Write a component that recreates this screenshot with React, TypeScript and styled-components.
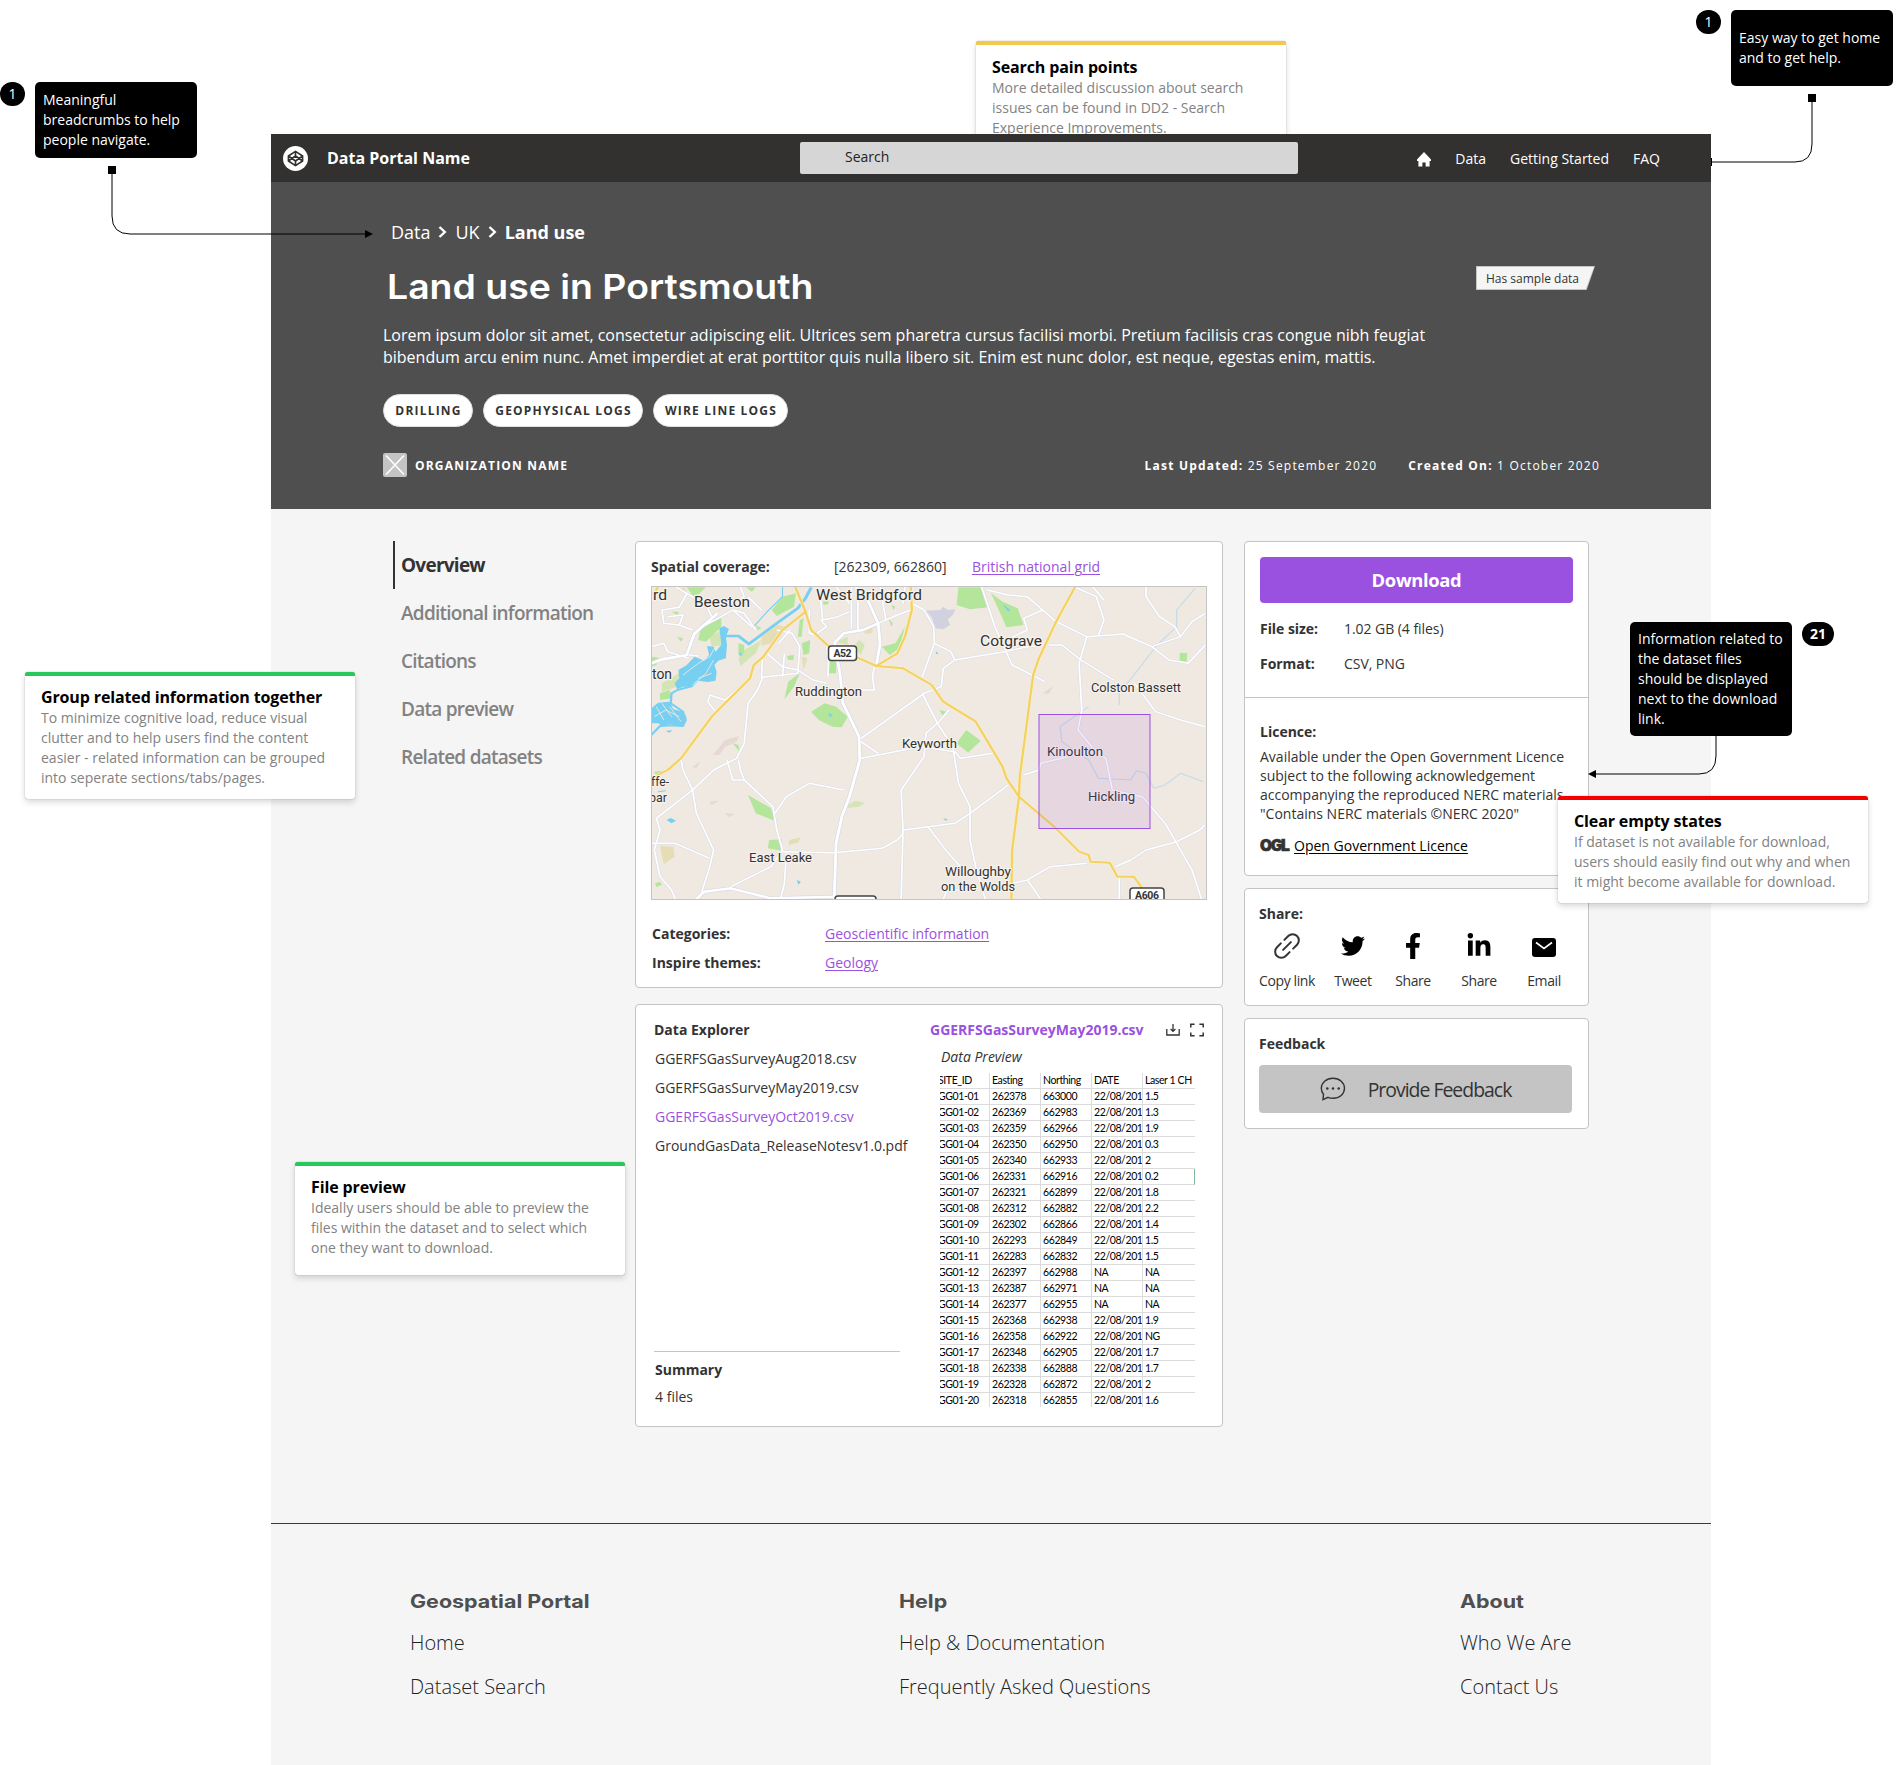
import React from "react";
import styled, { createGlobalStyle, css } from "styled-components";
import { FaTwitter, FaFacebookF, FaLinkedinIn } from "react-icons/fa";

const GlobalStyle = createGlobalStyle`
  * { box-sizing: border-box; }
  body {
    margin: 0;
    background: #fff;
    font-family: "Open Sans", "Noto Sans", sans-serif;
    color: #333;
  }
  p, h1, h2, h3 { margin: 0; }
`;

const purple = "#9b51e0";
const line = "#c4c4c4";
const display = `"Inter", "Open Sans", sans-serif`;

const Board = styled.div`
  position: relative;
  width: 1903px;
  height: 1765px;
  padding: 134px 192px 0 271px;
  overflow: hidden;
`;

const Page = styled.div`
  position: relative;
  width: 1440px;
  height: 1631px;
  background: #f5f5f5;
`;

/* Header */

const Header = styled.header`
  display: flex;
  align-items: center;
  height: 48px;
  padding: 0 51px 0 12px;
  background: #32312f;
  color: #fff;
`;

const Logo = styled.div`
  display: flex;
  align-items: center;
  justify-content: center;
  width: 25px;
  height: 25px;
  border-radius: 50%;
  background: #fff;
`;

const SiteName = styled.div`
  flex: none;
  width: 492px;
  padding-left: 19px;
  font-size: 16px;
  font-weight: 700;
  line-height: 24px;
`;

const SearchBox = styled.div`
  flex: none;
  width: 498px;
  height: 32px;
  padding-left: 45px;
  border-radius: 2px;
  background: #d6d6d6;
  color: #222;
  font-size: 14px;
  line-height: 30px;
`;

const TopNav = styled.nav`
  display: flex;
  flex: 1;
  align-items: center;
  justify-content: flex-end;
  padding-top: 2px;
  font-size: 14px;
  line-height: 20px;
  a { margin-left: 24px; }
`;

/* Hero */

const Hero = styled.section`
  height: 327px;
  padding: 38px 111px 0 112px;
  background: #4f4f4f;
  color: #fff;
`;

const Crumbs = styled.div`
  display: flex;
  align-items: center;
  gap: 8px;
  height: 24px;
  padding-left: 8px;
  font-size: 18px;
  line-height: 24px;
  strong { font-weight: 700; }
`;

const TitleRow = styled.div`
  display: flex;
  align-items: flex-start;
  justify-content: space-between;
  height: 40px;
  margin-top: 23px;
  padding: 0 5px 0 4px;
`;

const Title = styled.h1`
  font-family: ${display};
  font-size: 34px;
  font-weight: 600;
  line-height: 40px;
  transform: scaleX(1.1);
  transform-origin: left;
`;

const Flag = styled.span`
  position: relative;
  width: 119px;
  height: 24px;
  margin-top: -1px;
  padding-left: 10px;
  background: #c4c4c4;
  clip-path: polygon(0 0, 100% 0, 93% 100%, 0 100%);
  font-size: 12px;
  line-height: 25px;
  color: #333;
  &::before {
    content: "";
    position: absolute;
    inset: 1px;
    background: #f5f5f5;
    clip-path: polygon(0 0, 100% 0, 93% 100%, 0 100%);
  }
  span { position: relative; }
`;

const Lead = styled.p`
  width: 1100px;
  margin-top: 17px;
  font-size: 16px;
  line-height: 22px;
`;

const Tags = styled.div`
  display: flex;
  gap: 10px;
  margin-top: 26px;
`;

const Tag = styled.span<{ $w: number }>`
  width: ${(p) => p.$w}px;
  height: 33px;
  padding-left: 1px;
  border: 1px solid #e0e0e0;
  border-radius: 17px;
  background: #fff;
  color: #333;
  font-size: 12px;
  font-weight: 700;
  letter-spacing: 1.2px;
  line-height: 32px;
  text-align: center;
  white-space: nowrap;
`;

const Meta = styled.div`
  display: flex;
  align-items: center;
  height: 24px;
  margin-top: 26px;
  font-size: 12px;
  letter-spacing: 1.2px;
  line-height: 24px;
  white-space: nowrap;
`;

const OrgMark = styled.svg`
  width: 24px;
  height: 24px;
  margin-right: 8px;
  border-radius: 2px;
  background: #c4c4c4;
`;

const OrgName = styled.strong`
  flex: 1;
  padding-top: 1px;
`;

const Dates = styled.div`
  display: flex;
  gap: 31px;
  padding-top: 1px;
  font-weight: 400;
`;

/* Body */

const Main = styled.main`
  display: flex;
  align-items: flex-start;
  height: 1014px;
  padding: 32px 0 0 122px;
`;

const Sidebar = styled.nav`
  width: 242px;
`;

const SideLink = styled.a<{ $active?: boolean }>`
  display: block;
  height: 48px;
  padding-left: 6px;
  border-left: 2px solid ${(p) => (p.$active ? "#333" : "transparent")};
  color: ${(p) => (p.$active ? "#333" : "#828282")};
  font-size: 19px;
  font-weight: ${(p) => (p.$active ? 700 : 600)};
  letter-spacing: -0.75px;
  line-height: 48px;
`;

const Column = styled.div<{ $w: number; $gap: number; $ml?: number }>`
  display: flex;
  flex-direction: column;
  gap: ${(p) => p.$gap}px;
  width: ${(p) => p.$w}px;
  margin-left: ${(p) => p.$ml ?? 0}px;
`;

const Card = styled.section<{ $h: number }>`
  height: ${(p) => p.$h}px;
  border: 1px solid ${line};
  border-radius: 4px;
  background: #fff;
  font-size: 14px;
  line-height: 20px;
`;

const cell = css`
  white-space: nowrap;
`;

const Label = styled.strong`
  ${cell}
  font-weight: 700;
`;

const Link = styled.a`
  ${cell}
  color: ${purple};
  text-decoration: underline;
  text-underline-offset: 2px;
`;

const CoverageRow = styled.div`
  display: grid;
  grid-template-columns: 183px 138px 1fr;
  padding: 15px 0 9px 15px;
`;

const MapFrame = styled.div`
  width: 556px;
  height: 314px;
  margin-left: 15px;
  border: 1px solid ${line};
  svg { display: block; }
`;

const FactRow = styled.div<{ $mt: number }>`
  display: grid;
  grid-template-columns: 173px 1fr;
  height: 20px;
  margin: ${(p) => p.$mt}px 0 0 16px;
`;

const Explorer = styled(Card)`
  display: flex;
  padding: 15px 0 0 18px;
`;

const FilePane = styled.div`
  display: flex;
  flex-direction: column;
  width: 276px;
  height: 400px;
`;

const FileName = styled.a<{ $on?: boolean }>`
  ${cell}
  margin-top: 9px;
  padding-left: 1px;
  color: ${(p) => (p.$on ? purple : "#333")};
`;

const Summary = styled.div`
  width: 246px;
  margin-top: auto;
  margin-bottom: 13px;
  padding: 8px 0 0 1px;
  border-top: 1px solid ${line};
  p { margin-top: 7px; }
`;

const PreviewPane = styled.div`
  width: 274px;
`;

const PreviewHead = styled.div`
  display: flex;
  align-items: center;
  height: 20px;
  strong { flex: 1; color: ${purple}; }
  svg + svg { margin-left: 10px; }
`;

const PreviewCaption = styled.p`
  margin: 7px 0 6px 11px;
  font-style: italic;
`;

const Table = styled.div`
  display: grid;
  grid-template-columns: 50px 51px 51px 51px 52px;
  grid-auto-rows: 16px;
  width: 255px;
  height: 334px;
  margin-left: 10px;
  overflow: hidden;
`;

const Cell = styled.div<{ $first: boolean; $last: boolean }>`
  overflow: hidden;
  padding-left: ${(p) => (p.$first ? 0 : 2)}px;
  text-indent: ${(p) => (p.$first ? -2 : 0)}px;
  border-right: ${(p) => (p.$last ? "0" : "1px solid #dcdcdc")};
  border-bottom: 1px solid #dcdcdc;
  color: #000;
  font-family: "Lato", "Open Sans", sans-serif;
  font-size: 10.5px;
  letter-spacing: -0.4px;
  line-height: 15px;
  white-space: nowrap;
`;

const Selection = styled(Cell)`
  border-right: 1px solid #7fb89a;
`;

const DownloadCard = styled(Card)`
  padding-top: 15px;
`;

const Button = styled.button<{ $tone: "primary" | "muted" }>`
  display: flex;
  align-items: center;
  justify-content: center;
  width: 313px;
  height: ${(p) => (p.$tone === "primary" ? 46 : 48)}px;
  margin-left: ${(p) => (p.$tone === "primary" ? 15 : 14)}px;
  padding: 0 0 ${(p) => (p.$tone === "primary" ? 2 : 0)}px;
  border: 0;
  border-radius: 4px;
  background: ${(p) => (p.$tone === "primary" ? purple : "#c4c4c4")};
  color: ${(p) => (p.$tone === "primary" ? "#fff" : "#333")};
  font-family: inherit;
  font-size: ${(p) => (p.$tone === "primary" ? 18.4 : 19.4)}px;
  font-weight: ${(p) => (p.$tone === "primary" ? 700 : 400)};
  letter-spacing: ${(p) => (p.$tone === "primary" ? -0.35 : -0.98)}px;
  svg { margin-right: 22px; }
`;

const SpecRow = styled.div<{ $mt: number }>`
  display: grid;
  grid-template-columns: 84px 1fr;
  height: 20px;
  margin: ${(p) => p.$mt}px 0 0 15px;
  letter-spacing: -0.05px;
`;

const Licence = styled.div`
  margin-top: 23px;
  padding: 24px 0 0 15px;
  border-top: 1px solid ${line};
  p { width: 320px; margin-top: 5px; line-height: 19px; }
`;

const OglRow = styled.div`
  display: flex;
  align-items: center;
  gap: 4px;
  margin-top: 13px;
  a { color: #000; text-decoration: underline; text-underline-offset: 2px; }
`;

const OglMark = styled.span`
  width: 30px;
  font-family: "Inter", sans-serif;
  font-size: 15.5px;
  font-weight: 900;
  letter-spacing: -1.3px;
  -webkit-text-stroke: 0.6px #333;
`;

const PaddedLabel = styled(Label)<{ $pb?: number }>`
  display: block;
  padding: 15px 0 ${(p) => p.$pb ?? 0}px 14px;
`;

const ShareRow = styled.div`
  display: grid;
  grid-template-columns: 54px 78px 42px 90px 40px;
  margin-left: 15px;
  padding-top: 9px;
`;

const ShareItem = styled.a`
  display: flex;
  flex-direction: column;
  align-items: center;
  gap: 12px;
  font-size: 14px;
  letter-spacing: -0.4px;
  white-space: nowrap;
  svg { height: 26px; color: #000; }
`;

/* Footer */

const Footer = styled.footer`
  display: grid;
  grid-template-columns: 489px 561px 1fr;
  height: 108px;
  padding: 65px 0 0 139px;
  border-top: 1px solid #1d3f76;
`;

const FooterColumn = styled.div`
  h3 {
    font-family: ${display};
    font-size: 18.5px;
    font-weight: 700;
    line-height: 24px;
    color: #4f4f4f;
    white-space: nowrap;
    transform: scaleX(1.16);
    transform-origin: left;
  }
  a {
    display: block;
    margin-top: 16px;
    font-size: 20px;
    font-weight: 300;
    line-height: 28px;
    color: #222;
    white-space: nowrap;
  }
`;

/* Annotations pinned over the board */

const Pin = styled.div<{ $x: number; $y: number }>`
  position: absolute;
  left: ${(p) => p.$x}px;
  top: ${(p) => p.$y}px;
`;

const Callout = styled(Pin)<{ $h: number }>`
  display: flex;
  align-items: center;
  width: 162px;
  height: ${(p) => p.$h}px;
  padding: 0 0 0 8px;
  border-radius: 5px;
  background: #000;
  color: #fff;
  font-size: 14px;
  line-height: 20px;
  white-space: pre-line;
`;

const Badge = styled(Pin)<{ $w?: number }>`
  width: ${(p) => p.$w ?? 25}px;
  height: 24px;
  border-radius: 12px;
  background: #000;
  color: #fff;
  font-size: 14px;
  font-weight: ${(p) => (p.$w ? 700 : 400)};
  line-height: 24px;
  text-align: center;
`;

const Note = styled(Pin)<{ $w: number; $h: number; $color: string; $top?: number }>`
  width: ${(p) => p.$w}px;
  height: ${(p) => p.$h}px;
  padding: ${(p) => p.$top ?? 10}px 0 0 16px;
  border-top: 4px solid ${(p) => p.$color};
  border-radius: 3px;
  background: #fff;
  box-shadow: 0 0 1px rgba(0, 0, 0, 0.45), 0 3px 6px rgba(0, 0, 0, 0.16);
  color: #828282;
  font-size: 14px;
  line-height: 20px;
  white-space: pre-line;
  h2 {
    font-size: 16px;
    font-weight: 700;
    line-height: 22px;
    letter-spacing: -0.13px;
    color: #000;
  }
`;

const Wires = styled.svg`
  position: absolute;
  left: 0;
  top: 0;
  pointer-events: none;
`;

const HomeIcon = () => (
  <svg width="14" height="15" viewBox="0 0 14 15">
    <path d="M7 0 14 7.500 V9 H12.600 V14.500 H8.600 V10.500 H5.400 V14.500 H1.400 V9 H0 V7.500 Z" fill="#fff" />
  </svg>
);

const LogoIcon = () => (
  <svg width="17" height="17" viewBox="0 0 24 24" fill="none" stroke="#32312f" strokeWidth="2.3" strokeLinejoin="round">
    <path d="M12 2 22 8.5 22 15.5 12 22 2 15.5 2 8.5Z M12 22V15.5 M22 8.5 12 15.5 2 8.5 M2 15.5 12 8.5 22 15.5 M12 2V8.5" />
  </svg>
);

const Chevron = () => (
  <svg width="9" height="12" viewBox="0 0 9 12" fill="none" stroke="#fff" strokeWidth="2.4">
    <path d="M1.5 1 6.8 6 1.5 11" />
  </svg>
);

const TrayIcon = () => (
  <svg width="14" height="14" viewBox="0 0 14 14" fill="none" stroke="#333" strokeWidth="1.3">
    <path d="M.8 6V12H13.2V6 M7 1V8.4 M4.6 6 7 8.4 9.4 6" />
  </svg>
);

const ExpandIcon = () => (
  <svg width="14" height="14" viewBox="0 0 14 14" fill="none" stroke="#333" strokeWidth="1.5">
    <path d="M.8 4.6V1.2H4.6 M9.4 1.2H13.2V4.6 M13.2 9.4V12.8H9.4 M4.6 12.8H.8V9.4" />
  </svg>
);

const ChainIcon = () => (
  <svg width="26" height="26" viewBox="0 0 26 26" fill="none" stroke="#333" strokeWidth="2" strokeLinecap="round">
    <g transform="rotate(-45 13 13)">
      <path d="M10.500 6.800H5A6.200 6.200 0 0 0 5 19.200H10.500 M15.500 6.800H21A6.200 6.200 0 0 1 21 19.200H15.500 M7.500 13H18.500" />
    </g>
  </svg>
);

const MailIcon = () => (
  <svg width="24" height="26" viewBox="0 0 24 26">
    <rect x="0" y="5" width="24" height="19" rx="3" />
    <path d="M4 9.5 12 15.5 20 9.5" fill="none" stroke="#fff" strokeWidth="1.6" />
  </svg>
);

const ChatIcon = () => (
  <svg width="26" height="24" viewBox="0 0 26 24" fill="none" stroke="#333" strokeWidth="1.4">
    <path d="M13 1.3C19.700 1.300 24.500 5.800 24.500 11.300C24.500 17 19.600 21.300 13 21.300C11.200 21.300 9.500 21 8 20.300L3 22.600 3.500 17.300C2.100 15.600 1.300 13.500 1.300 11.300C1.300 5.800 6.300 1.300 13 1.300Z" />
    <g fill="#333" stroke="none">
      <circle cx="7.300" cy="11.500" r="1.300" />
      <circle cx="13" cy="11.500" r="1.300" />
      <circle cx="18.700" cy="11.500" r="1.300" />
    </g>
  </svg>
);

const minorRoads = [
  "M57 400 90 385 150 375 165 320 190 290 240 260 270 240 300 250 330 300",
  "M85 240 130 232 150 190 120 170 M85 240 90 280 130 285 140 255 100 260 M150 190 200 225 215 260 M180 215 260 225 300 200 290 170",
  "M130 285 165 300 M57 350 90 340 100 365 155 385 M155 375 180 378 M270 240 320 290 M310 200 345 240",
  "M470 240 470 310 500 320 515 345 M500 210 505 270 540 262 575 245 M500 270 515 290 490 310 M615 200 590 170 M575 220 560 200 540 170",
  "M650 280 700 255 735 240 M580 295 580 170 M597 170 597 300 M655 170 670 270 M720 170 715 220",
  "M730 215 770 240 795 290 797 340 840 365 850 390 M797 340 765 440 M1090 345 1040 350 980 365 850 390 820 415 815 470 770 490 605 625",
  "M920 170 955 290 1000 405 1085 455 M935 180 990 195 1040 200 1080 240 1115 275 M1080 240 1030 265 1040 300 985 330",
  "M1165 172 1220 200 1240 270 1225 318 M1210 170 1240 210 M1115 275 1195 320 1290 312 1365 350 1410 390 1460 400 1505 345",
  "M1365 350 1440 320 1470 275 1505 250 M1350 170 1350 200 1385 260 1425 290 1440 320",
  "M1195 320 1175 400 1182 540 1172 600 1215 660 1245 685 1262 780 M1095 345 1130 345 1180 390 1265 450 M1320 460 1375 545 1440 570 1505 590",
  "M355 365 400 410 440 420 480 450 515 460 M385 300 425 310 445 350 440 430 345 442 348 380 M405 370 400 440 M420 300 390 340",
  "M515 345 520 400 518 440 M640 410 635 440 640 480 590 480 M348 442 335 480 310 520 300 640 280 685 220 720 165 780 70 865 80 900 65 960 80 1040 110 1080 120 1108",
  "M205 515 210 495 250 510 M205 515 225 545 M250 510 300 460 M135 690 140 720 165 780 175 850 220 960 210 1010 185 1100",
  "M255 690 270 750 300 750 375 830 385 900 400 960 370 1010 265 1070 M285 690 290 720 300 750",
  "M605 685 650 675 760 650 850 665 865 685 950 670 M605 635 650 670 M765 490 805 580 845 650 860 760 890 830 890 930 905 1010 930 1108",
  "M835 540 805 580 775 610 770 680 710 780 715 900 710 1108 M715 900 780 890 850 880 890 850 990 765 M780 890 830 965 880 1030",
  "M380 850 410 800 470 760 560 780 M57 940 120 940 210 985 M400 965 535 968 660 955 700 930 715 910 M410 970 405 1060 395 1108",
  "M1030 735 1070 720 1075 700 1140 682 1215 655 M1262 780 1340 800 1400 880 1430 940 1470 1020 1495 1108",
  "M1270 1010 1310 990 1350 960 1430 935 1490 900 1503 885 M1000 1060 1040 1050 1100 1010 1195 1000 M1040 1050 1075 1108 M1280 1040 1280 1108 1255 1108 M820 1108 830 1080 870 1080",
];

const majorRoads = [
  "M536 338 550 430 558 520 600 620 602 690 575 800 555 860 540 940 535 1108",
  "M615 190 650 280 655 340 645 408 M536 338 560 310 610 300 650 280",
  "M175 1108 195 1085 265 1075 370 1105 540 1100 M57 400 80 390 150 375 170 310 230 250",
];

const yellowRoads = [
  "M57 745 100 720 135 685 215 560 315 445 325 405 350 380 400 300 460 245 433 170",
  "M460 245 475 300 520 348 590 380 645 408 715 415 790 465 820 515 905 575 975 710 985 745 1018 800 1110 890 1175 965 1200 975 1205 995 1255 998 1275 1040 1318 1040 1340 1075",
  "M735 170 738 240 720 320 700 370 645 408",
  "M1165 170 1115 275 1070 385 1055 435 1020 740 1018 800 1000 960 998 1108",
  "M65 190 75 170",
];

const parks = [
  "M860 172 918 172 937 232 890 238 855 225Z",
  "M945 190 975 215 1015 235 1022 260 1030 285 985 292 975 265Z",
  "M372 240 400 200 435 190 430 230 385 258Z M150 172 200 172 170 205Z M185 300 210 270 240 262 240 290 200 335 180 330Z",
  "M660 350 695 340 720 290 705 355 680 375Z M475 545 510 520 540 530 570 560 555 592 530 590 495 570Z",
  "M520 390 540 395 540 430 520 430Z M445 270 455 265 450 320 440 320Z M450 340 472 330 470 370 455 375Z",
  "M415 455 445 430 430 470 405 508Z M310 795 370 835 380 872 330 850Z M855 640 880 600 918 632 885 668Z",
  "M365 930 398 928 398 962 362 955Z M80 490 105 480 110 505 80 510Z M57 380 80 385 70 405 57 410Z",
  "M270 640 285 645 288 665Z M810 540 828 545 820 560Z M1438 368 1458 370 1455 400 1438 395Z M675 262 688 280 685 290Z M125 320 140 325 135 335Z",
  "M285 340 300 345 300 370 285 375Z M330 285 345 295 335 300Z M505 215 520 212 520 222 508 225Z M65 725 88 722 70 738Z M67 1060 80 1055 85 1065 70 1070Z M305 172 330 172 320 185Z M110 245 130 245 125 255Z M412 378 430 375 428 390 415 390Z M685 225 695 230 690 240Z",
];

type PlaceName = { name: string; x: number; y: number; size: number; width: number };

const places: PlaceName[] = [
  { name: "rd", x: 1, y: 13, size: 15, width: 14 },
  { name: "Beeston", x: 42, y: 20, size: 15, width: 56 },
  { name: "West Bridgford", x: 164, y: 13, size: 15, width: 106 },
  { name: "Cotgrave", x: 328, y: 59, size: 15, width: 62 },
  { name: "ton", x: 0, y: 92, size: 14, width: 20 },
  { name: "Ruddington", x: 143, y: 109, size: 13, width: 67 },
  { name: "Colston Bassett", x: 439, y: 105, size: 13, width: 90 },
  { name: "Keyworth", x: 250, y: 161, size: 13, width: 55 },
  { name: "Kinoulton", x: 395, y: 169, size: 13, width: 56 },
  { name: "Hickling", x: 436, y: 214, size: 13, width: 47 },
  { name: "ffe-", x: -1, y: 199, size: 13, width: 18 },
  { name: "bar", x: -3, y: 215, size: 13, width: 18 },
  { name: "East Leake", x: 97, y: 275, size: 13, width: 63 },
  { name: "Willoughby", x: 293, y: 289, size: 13, width: 66 },
  { name: "on the Wolds", x: 289, y: 304, size: 13, width: 74 },
];

const AreaMap = () => (
  <svg width="554" height="312" viewBox="0 0 554 312">
    <rect width="554" height="312" fill="#efe9e1" />
    <g transform="scale(.3827 .33333) translate(-59 -171)" fill="none" strokeLinejoin="round">
      <g fill="#d3e5b4">
        <path d="M210 320 240 300 245 345 215 350Z M85 460 130 430 125 470 85 485Z M540 335 570 320 570 345Z M600 330 615 345 605 375 585 350Z M285 385 300 360 345 330 330 370 290 408Z M560 835 590 812 615 818 600 830Z" />
      </g>
      <g fill="#e5ddb5">
        <path d="M345 320 385 285 410 290 370 340 345 348Z M612 292 635 290 635 308 615 312Z M80 948 115 950 118 980 90 1003Z M418 930 448 922 440 938 415 945Z M450 380 465 385 455 420Z M125 180 145 172 150 190Z" />
      </g>
      <g fill="#e8d7d3">
        <path d="M218 675 250 630 287 618 280 635 250 650 235 675Z M208 815 235 812 215 825Z M250 850 275 852 260 862Z M1080 490 1108 468 1095 492Z M165 710 185 695 175 715Z" />
      </g>
      <path d="M775 242 812 240 820 230 832 240 852 238 845 255 832 268 838 285 820 298 800 295 790 262Z" fill="#d2d1df" />
      {parks.map((d) => <path key={d} d={d} fill="#b3e59b" />)}
      <g fill="#77cff2">
        <path d="M235 295 247 288 260 297 252 320 255 345 252 385 232 392 222 405 228 425 225 452 205 456 180 452 165 470 140 470 125 478 118 460 130 445 128 420 150 405 170 380 195 392 208 375 203 348 220 350 225 365 240 345 238 320Z" />
        <path d="M57 535 75 518 105 515 115 538 140 545 149 560 145 580 128 590 110 582 85 587 75 580 57 580Z" />
        <path d="M97 870 108 864 122 872 110 880Z M800 362 808 372 802 372Z M820 865 832 868 826 872Z M437 1050 448 1055 442 1064Z M520 550 532 555 524 562Z M288 365 296 375 288 378Z M975 222 995 240 990 245Z M95 603 112 600 105 608Z" />
      </g>
      <g stroke="#77cff2">
        <path d="M250 318 285 318 312 342 350 310 385 280 440 235 460 205 475 172" strokeWidth="8" />
        <path d="M400 172 400 200 360 245 325 290 M75 785 95 782" strokeWidth="3" />
        <path d="M165 468 125 480 110 490 108 520 140 545 147 570 140 588 110 586 80 588 57 615" strokeWidth="6" />
      </g>
      <g stroke="#efe9e1" strokeWidth="2.500">
        <path d="M140 435 180 400 210 380 225 350 M165 465 200 430 220 390 M70 530 90 570 M85 520 110 560 M65 560 95 540 130 560 M180 445 215 430 M105 530 135 575" />
      </g>
      <path d="M1478 175 1430 240 1430 290 1375 350 1315 440 1280 490 1280 525 M1200 530 1125 590 1130 635 1200 690 1225 745 1310 750 1325 722 1350 730 1370 775 1400 765 1440 730 1500 755" stroke="#c3dbe8" strokeWidth="3" />
      <g>
        {minorRoads.map((d) => <path key={d} d={d} stroke="#dbdce8" strokeWidth="7.500" />)}
        {majorRoads.map((d) => <path key={d} d={d} stroke="#d6d8e6" strokeWidth="11" />)}
        {minorRoads.map((d) => <path key={d} d={d} stroke="#fff" strokeWidth="4.500" />)}
        {majorRoads.map((d) => <path key={d} d={d} stroke="#fff" strokeWidth="7.500" />)}
        {yellowRoads.map((d) => <path key={d} d={d} stroke="#fbf1cf" strokeWidth="9" />)}
        {yellowRoads.map((d) => <path key={d} d={d} stroke="#f3d162" strokeWidth="6" />)}
      </g>
    </g>
    <g fill="#fff" stroke="#444" strokeWidth="1.500">
      <rect x="176.500" y="59" width="28" height="14.500" rx="3" />
      <rect x="478" y="301" width="34" height="18" rx="3" />
      <rect x="183" y="309" width="41" height="18" rx="3" />
    </g>
    <g fontFamily="Roboto, sans-serif" fontSize="10.500" fontWeight="700" fill="#333">
      <text x="181.500" y="70" textLength="18">A52</text>
      <text x="483" y="312" textLength="24">A606</text>
    </g>
    <g fontFamily="Roboto, sans-serif" fill="#333" stroke="#f6f2ed" strokeWidth="2.500" strokeLinejoin="round" paintOrder="stroke">
      {places.map((p) => (
        <text key={p.name} x={p.x} y={p.y} fontSize={p.size} textLength={p.width} lengthAdjust="spacingAndGlyphs">{p.name}</text>
      ))}
    </g>
    <rect x="387" y="127.500" width="111" height="114" fill="#9b51e0" fillOpacity=".12" stroke="#9b51e0" />
  </svg>
);

const easting = [378, 369, 359, 350, 340, 331, 321, 312, 302, 293, 283, 397, 387, 377, 368, 358, 348, 338, 328, 318];
const northing = ["663000", "662983", "662966", "662950", "662933", "662916", "662899", "662882", "662866", "662849", "662832", "662988", "662971", "662955", "662938", "662922", "662905", "662888", "662872", "662855"];
const laser = ["1.5", "1.3", "1.9", "0.3", "2", "0.2", "1.8", "2.2", "1.4", "1.5", "1.5", "NA", "NA", "NA", "1.9", "NG", "1.7", "1.7", "2", "1.6"];
const rows: string[][] = [
  ["SITE_ID", "Easting", "Northing", "DATE", "Laser 1 CH"],
  ...easting.map((e, i) => [
    `GG01-${String(i + 1).padStart(2, "0")}`,
    `262${e}`,
    northing[i],
    laser[i] === "NA" ? "NA" : "22/08/201",
    laser[i],
  ]),
];

export default function App() {
  return (
    <Board>
      <GlobalStyle />
      <Note $x={976} $y={41} $w={310} $h={120} $top={11} $color="#f2c94c">
        <h2>Search pain points</h2>
        {"More detailed discussion about search\nissues can be found in DD2 - Search\nExperience Improvements."}
      </Note>

      <Page>
        <Header>
          <Logo><LogoIcon /></Logo>
          <SiteName>Data Portal Name</SiteName>
          <SearchBox>Search</SearchBox>
          <TopNav>
            <HomeIcon />
            <a>Data</a>
            <a>Getting Started</a>
            <a>FAQ</a>
          </TopNav>
        </Header>

        <Hero>
          <Crumbs>
            <span>Data</span><Chevron /><span>UK</span><Chevron /><strong>Land use</strong>
          </Crumbs>
          <TitleRow>
            <Title>Land use in Portsmouth</Title>
            <Flag><span>Has sample data</span></Flag>
          </TitleRow>
          <Lead>
            Lorem ipsum dolor sit amet, consectetur adipiscing elit. Ultrices sem pharetra cursus facilisi morbi. Pretium facilisis cras congue nibh feugiat
            <br />
            bibendum arcu enim nunc. Amet imperdiet at erat porttitor quis nulla libero sit. Enim est nunc dolor, est neque, egestas enim, mattis.
          </Lead>
          <Tags>
            <Tag $w={90}>DRILLING</Tag>
            <Tag $w={160}>GEOPHYSICAL LOGS</Tag>
            <Tag $w={135}>WIRE LINE LOGS</Tag>
          </Tags>
          <Meta>
            <OrgMark viewBox="0 0 24 24"><path d="M3 2.500 21 21.500M21 2.500 3 21.500" stroke="#fff" strokeWidth="1.600" /></OrgMark>
            <OrgName>ORGANIZATION NAME</OrgName>
            <Dates>
              <span><b>Last Updated:</b> 25 September 2020</span>
              <span><b>Created On:</b> 1 October 2020</span>
            </Dates>
          </Meta>
        </Hero>

        <Main>
          <Sidebar>
            <SideLink $active>Overview</SideLink>
            <SideLink>Additional information</SideLink>
            <SideLink>Citations</SideLink>
            <SideLink>Data preview</SideLink>
            <SideLink>Related datasets</SideLink>
          </Sidebar>

          <Column $w={588} $gap={16}>
            <Card $h={447}>
              <CoverageRow>
                <Label>Spatial coverage:</Label>
                <span>[262309, 662860]</span>
                <Link>British national grid</Link>
              </CoverageRow>
              <MapFrame><AreaMap /></MapFrame>
              <FactRow $mt={24}><Label>Categories:</Label><Link>Geoscientific information</Link></FactRow>
              <FactRow $mt={9}><Label>Inspire themes:</Label><Link>Geology</Link></FactRow>
            </Card>

            <Explorer $h={423}>
              <FilePane>
                <Label>Data Explorer</Label>
                <FileName>GGERFSGasSurveyAug2018.csv</FileName>
                <FileName>GGERFSGasSurveyMay2019.csv</FileName>
                <FileName $on>GGERFSGasSurveyOct2019.csv</FileName>
                <FileName>GroundGasData_ReleaseNotesv1.0.pdf</FileName>
                <Summary>
                  <Label>Summary</Label>
                  <p>4 files</p>
                </Summary>
              </FilePane>
              <PreviewPane>
                <PreviewHead>
                  <strong>GGERFSGasSurveyMay2019.csv</strong>
                  <TrayIcon />
                  <ExpandIcon />
                </PreviewHead>
                <PreviewCaption>Data Preview</PreviewCaption>
                <Table>
                  {rows.map((row, r) =>
                    row.map((value, c) => {
                      const Box = r === 6 && c === 4 ? Selection : Cell;
                      return <Box key={`${r}-${c}`} $first={c === 0} $last={c === 4}>{value}</Box>;
                    })
                  )}
                </Table>
              </PreviewPane>
            </Explorer>
          </Column>

          <Column $w={345} $gap={12.5} $ml={21}>
            <DownloadCard $h={334.5}>
              <Button $tone="primary">Download</Button>
              <SpecRow $mt={16}><Label>File size:</Label><span>1.02 GB (4 files)</span></SpecRow>
              <SpecRow $mt={15}><Label>Format:</Label><span>CSV, PNG</span></SpecRow>
              <Licence>
                <Label>Licence:</Label>
                <p>
                  Available under the Open Government Licence<br />
                  subject to the following acknowledgement<br />
                  accompanying the reproduced NERC materials<br />
                  "Contains NERC materials ©NERC 2020"
                </p>
                <OglRow><OglMark>OGL</OglMark><a>Open Government Licence</a></OglRow>
              </Licence>
            </DownloadCard>

            <Card $h={117.5}>
              <PaddedLabel>Share:</PaddedLabel>
              <ShareRow>
                <ShareItem><ChainIcon />Copy link</ShareItem>
                <ShareItem><FaTwitter size={24} />Tweet</ShareItem>
                <ShareItem><FaFacebookF size={24} />Share</ShareItem>
                <ShareItem><FaLinkedinIn size={28} />Share</ShareItem>
                <ShareItem><MailIcon />Email</ShareItem>
              </ShareRow>
            </Card>

            <Card $h={111}>
              <PaddedLabel $pb={11}>Feedback</PaddedLabel>
              <Button $tone="muted"><ChatIcon />Provide Feedback</Button>
            </Card>
          </Column>
        </Main>

        <Footer>
          <FooterColumn>
            <h3>Geospatial Portal</h3>
            <a>Home</a>
            <a>Dataset Search</a>
          </FooterColumn>
          <FooterColumn>
            <h3>Help</h3>
            <a>Help &amp; Documentation</a>
            <a>Frequently Asked Questions</a>
          </FooterColumn>
          <FooterColumn>
            <h3>About</h3>
            <a>Who We Are</a>
            <a>Contact Us</a>
          </FooterColumn>
        </Footer>
      </Page>

      <Wires width="1903" height="1765" fill="none" stroke="#000" strokeWidth="1">
        <path d="M112 170V216Q112 234 130 234H366" />
        <path d="M1812 98V144Q1812 162 1795 162H1711" />
        <path d="M1716 736V756Q1716 774 1699 774H1594" />
        <g fill="#000" stroke="none">
          <rect x="108" y="166" width="8" height="8" />
          <rect x="1808" y="94" width="8" height="8" />
          <rect x="1711" y="158" width="1" height="8" />
          <path d="M365 230 373 234 365 238Z M1596 770 1588 774 1596 778Z" />
        </g>
      </Wires>

      <Badge $x={0} $y={82}>1</Badge>
      <Callout $x={35} $y={82} $h={76}>{"Meaningful\nbreadcrumbs to help\npeople navigate."}</Callout>
      <Badge $x={1696} $y={10}>1</Badge>
      <Callout $x={1731} $y={10} $h={76}>{"Easy way to get home\nand to get help."}</Callout>
      <Callout $x={1630} $y={622} $h={114}>{"Information related to\nthe dataset files\nshould be displayed\nnext to the download\nlink."}</Callout>
      <Badge $x={1802} $y={622} $w={32}>21</Badge>

      <Note $x={25} $y={672} $w={330} $h={127} $color="#27c95a">
        <h2>Group related information together</h2>
        {"To minimize cognitive load, reduce visual\nclutter and to help users find the content\neasier - related information can be grouped\ninto seperate sections/tabs/pages."}
      </Note>
      <Note $x={295} $y={1162} $w={330} $h={113} $color="#27c95a">
        <h2>File preview</h2>
        {"Ideally users should be able to preview the\nfiles within the dataset and to select which\none they want to download."}
      </Note>
      <Note $x={1558} $y={796} $w={310} $h={107} $color="#f40000">
        <h2>Clear empty states</h2>
        {"If dataset is not available for download,\nusers should easily find out why and when\nit might become available for download."}
      </Note>
    </Board>
  );
}
